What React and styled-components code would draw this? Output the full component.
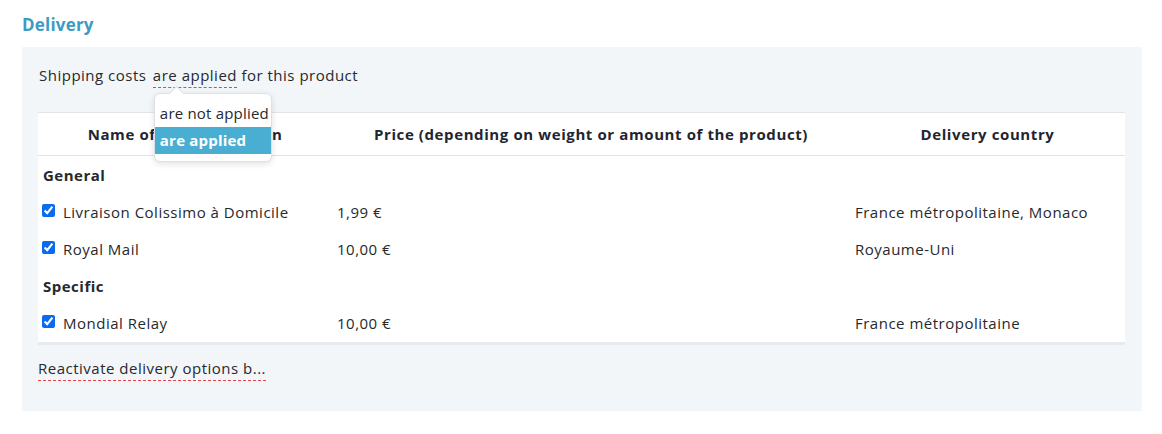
import styled, { createGlobalStyle } from "styled-components";

const Global = createGlobalStyle`
  body {
    margin: 0;
    background: #fff;
    font-family: "Open Sans", "Liberation Sans", sans-serif;
    letter-spacing: 0.5px;
    color: #26292d;
  }
`;

const Page = styled.div`
  padding: 12px 20px 0 22px;
`;

const Heading = styled.h2`
  margin: 0 0 9px;
  font-size: 17px;
  font-weight: 700;
  line-height: 26px;
  letter-spacing: 0.2px;
  color: #3d9bc3;
`;

const Panel = styled.div`
  background: #f3f6f9;
  padding: 17px 17px 30px 16px;
`;

const Sentence = styled.p`
  margin: 0 0 26px 1px;
  font-size: 15px;
  line-height: 22px;
`;

const Toggle = styled.span`
  position: relative;
  margin-left: 2px;
  border-bottom: 1px dashed #e8434b;
  padding-bottom: 2px;
  cursor: pointer;
`;

const Popup = styled.div`
  position: absolute;
  left: 1px;
  top: 28px;
  width: 116px;
  padding: 6px 0 7px;
  background: #fff;
  border: 1px solid #dde1e5;
  border-radius: 6px;
  box-shadow: 0 2px 6px rgba(0, 0, 0, 0.12);
  z-index: 2;

  &::before {
    content: "";
    position: absolute;
    left: 16px;
    top: -6px;
    width: 10px;
    height: 10px;
    background: #fff;
    border-left: 1px solid #dde1e5;
    border-top: 1px solid #dde1e5;
    transform: rotate(45deg);
  }
`;

const Option = styled.div`
  position: relative;
  padding: 0 5px;
  height: 27px;
  line-height: 27px;
  font-size: 15px;
  letter-spacing: 0.2px;
  white-space: nowrap;
  font-weight: ${(p) => (p.$active ? 700 : 400)};
  color: ${(p) => (p.$active ? "#fff" : "#26292d")};
  background: ${(p) => (p.$active ? "#4aaed3" : "transparent")};
`;

const Table = styled.table`
  width: 100%;
  table-layout: fixed;
  border-collapse: collapse;
  background: #fff;
  font-size: 15px;
  border-top: 1px solid #e1e5e9;
  border-bottom: 3px solid #e6eaee;
`;

const Th = styled.th`
  box-sizing: border-box;
  height: 43px;
  padding: 0 5px;
  text-align: center;
  font-weight: 700;
  letter-spacing: 0.6px;
  color: #1f2630;
  border-bottom: 1px solid #dfe2e6;
  width: ${(p) => (p.$w ? `${p.$w}px` : "auto")};
`;

const GroupCell = styled.td`
  height: 37px;
  padding: 0 5px;
  font-weight: 700;
  color: #26292d;
`;

const Td = styled.td`
  height: ${(p) => (p.$last ? 38 : 37)}px;
  padding: 0 5px;
  vertical-align: middle;
  white-space: nowrap;
`;

const Check = styled.label`
  display: flex;
  align-items: center;
  gap: 8px;

  input {
    margin: 0 0 3px -1px;
    width: 13px;
    height: 13px;
    accent-color: #0b6bf0;
  }
`;

const Reactivate = styled.span`
  display: inline-block;
  margin-top: 12px;
  font-size: 15px;
  line-height: 22px;
  padding-bottom: 1px;
  border-bottom: 1px dashed #e8434b;
`;

const groups = [
  {
    name: "General",
    rows: [
      ["Livraison Colissimo à Domicile", "1,99 €", "France métropolitaine, Monaco"],
      ["Royal Mail", "10,00 €", "Royaume-Uni"],
    ],
  },
  {
    name: "Specific",
    rows: [["Mondial Relay", "10,00 €", "France métropolitaine"]],
  },
];

export default function App() {
  return (
    <>
      <Global />
      <Page>
        <Heading>Delivery</Heading>
        <Panel>
          <Sentence>
            Shipping costs{" "}
            <Toggle>
              are applied
              <Popup>
                <Option>are not applied</Option>
                <Option $active>are applied</Option>
              </Popup>
            </Toggle>{" "}
            for this product
          </Sentence>
          <Table>
            <thead>
              <tr>
                <Th $w={294}>Name of delivery option</Th>
                <Th $w={518}>Price (depending on weight or amount of the product)</Th>
                <Th>Delivery country</Th>
              </tr>
            </thead>
            <tbody>
              {groups.map((g, gi) => (
                <>
                  <tr key={g.name}>
                    <GroupCell colSpan={3}>{g.name}</GroupCell>
                  </tr>
                  {g.rows.map(([name, price, country], ri) => {
                    const last = gi === groups.length - 1 && ri === g.rows.length - 1;
                    return (
                      <tr key={name}>
                        <Td $last={last}>
                          <Check>
                            <input type="checkbox" defaultChecked />
                            {name}
                          </Check>
                        </Td>
                        <Td $last={last}>{price}</Td>
                        <Td $last={last}>{country}</Td>
                      </tr>
                    );
                  })}
                </>
              ))}
            </tbody>
          </Table>
          <Reactivate>Reactivate delivery options b...</Reactivate>
        </Panel>
      </Page>
    </>
  );
}
